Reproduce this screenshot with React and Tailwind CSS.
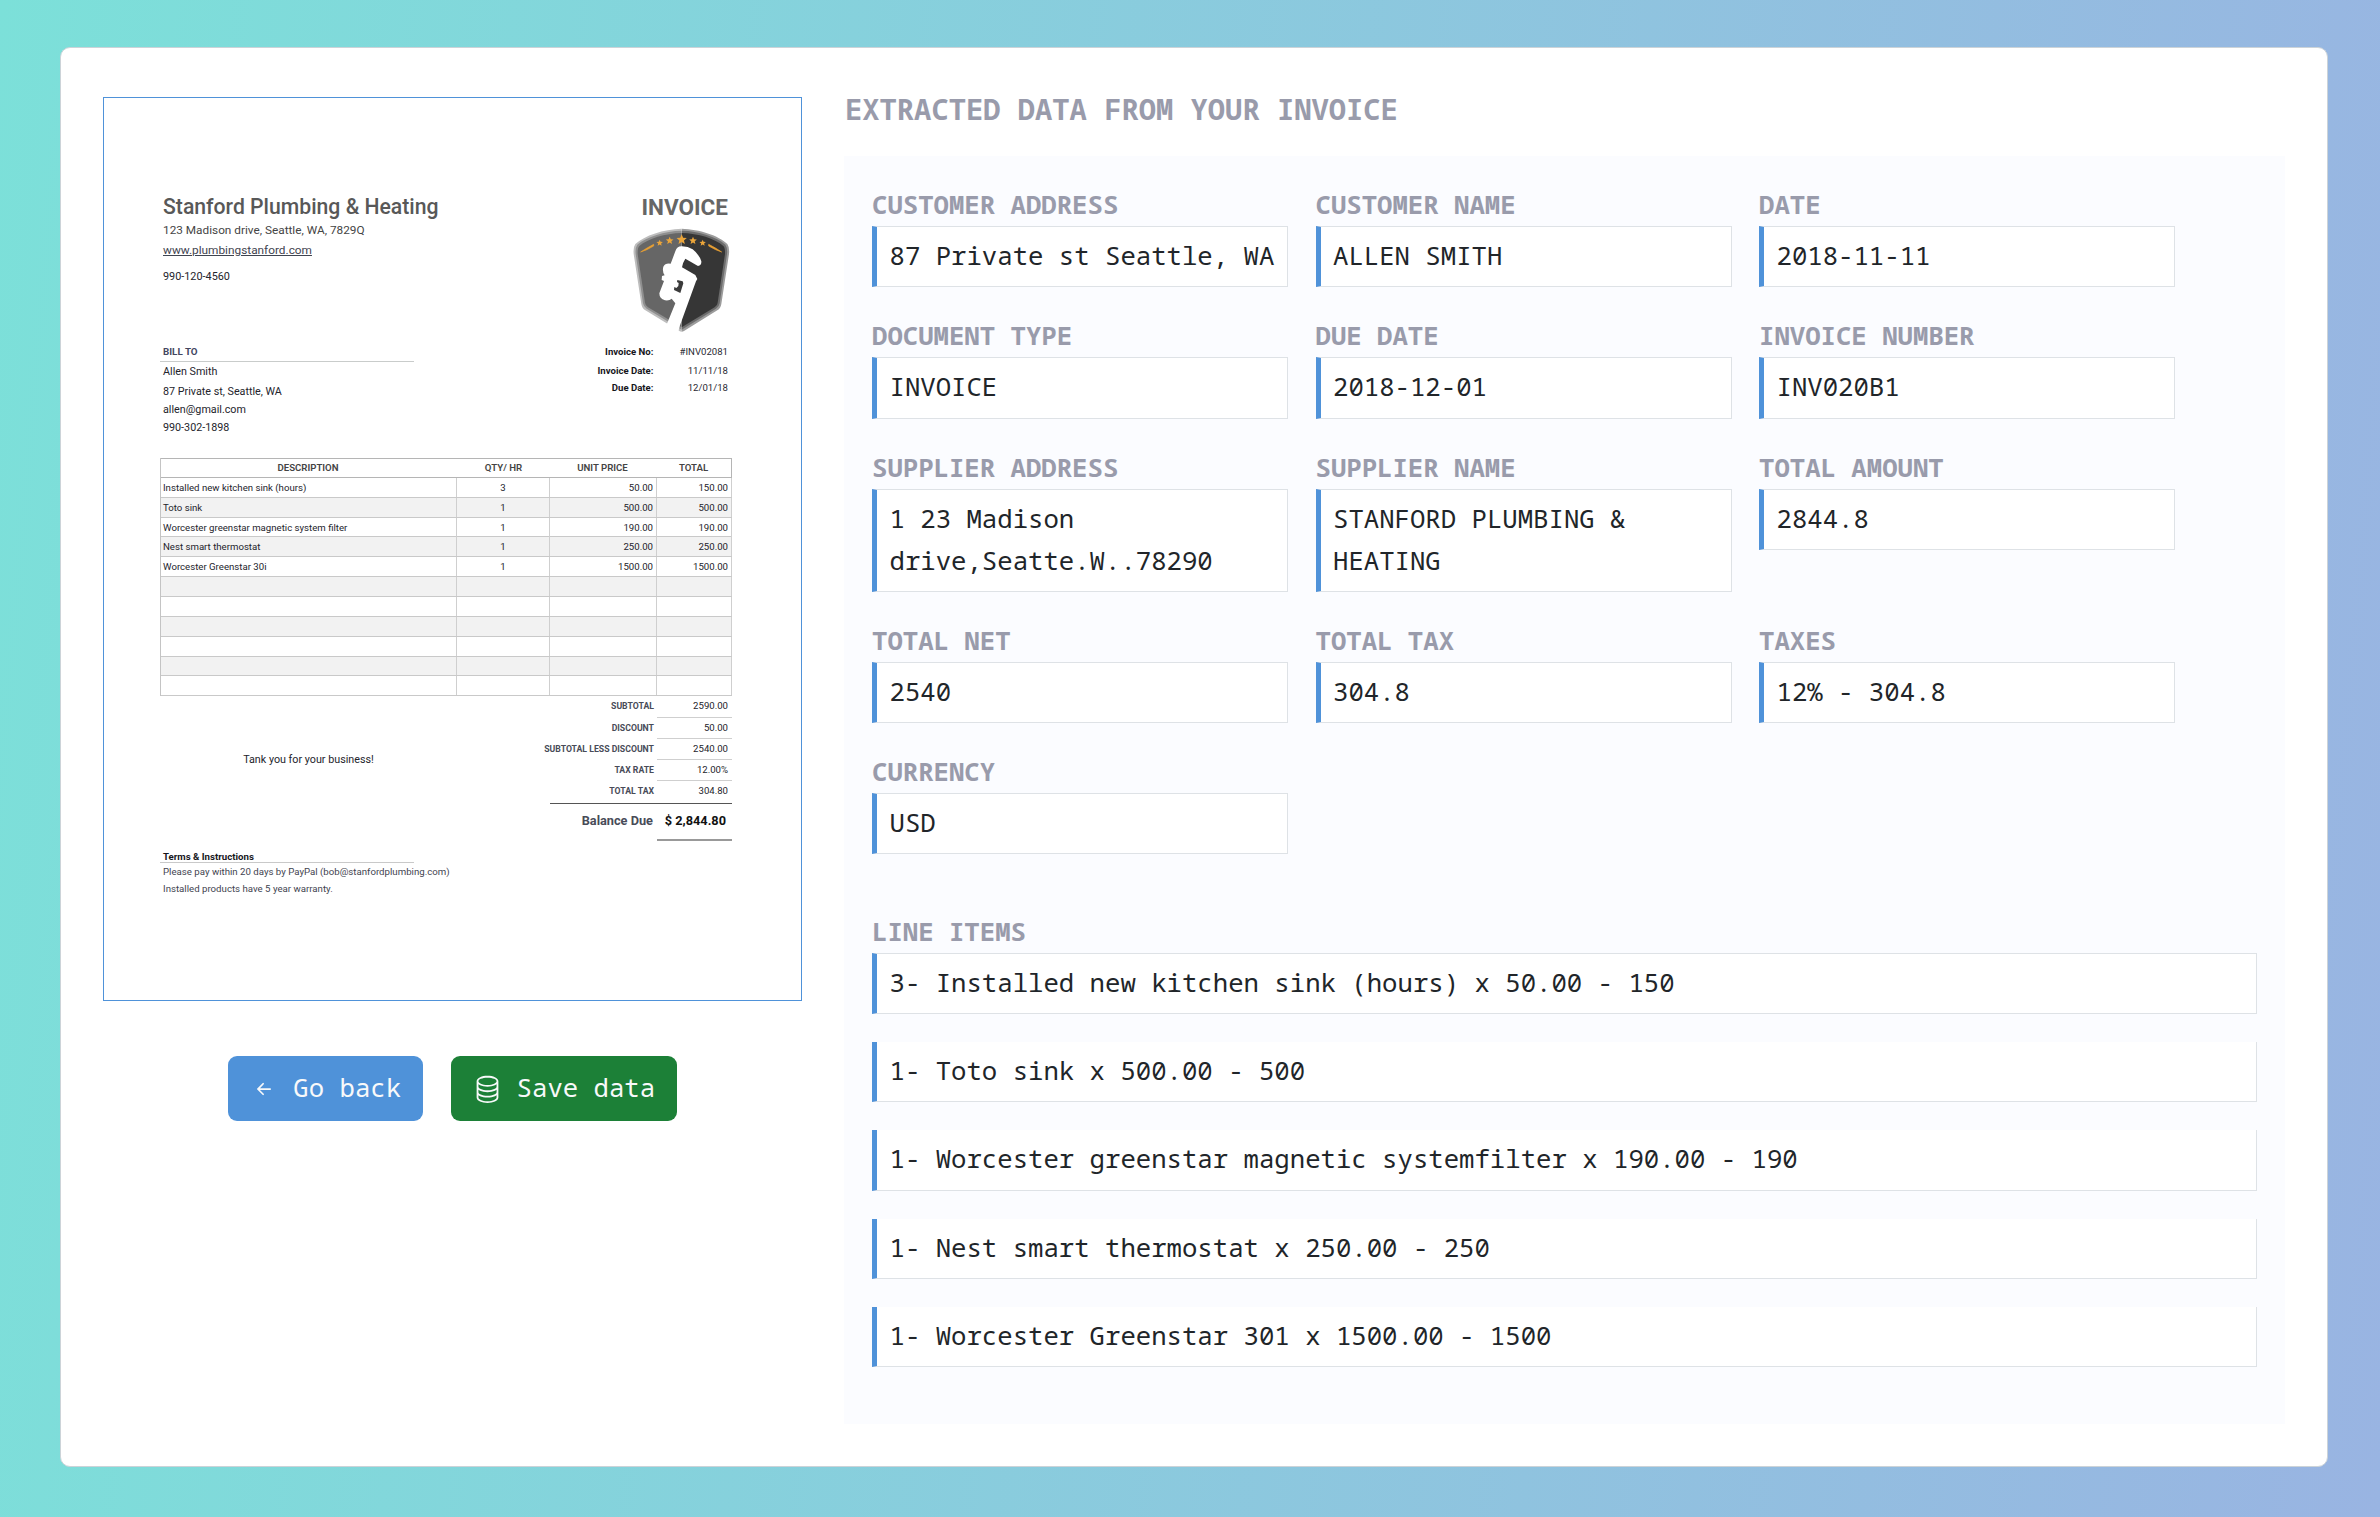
import { BsArrowLeftShort, BsDatabase } from 'react-icons/bs';

const fields = [
  ['CUSTOMER ADDRESS', '87 Private st Seattle, WA'],
  ['CUSTOMER NAME', 'ALLEN SMITH'],
  ['DATE', '2018-11-11'],
  ['DOCUMENT TYPE', 'INVOICE'],
  ['DUE DATE', '2018-12-01'],
  ['INVOICE NUMBER', 'INV020B1'],
  ['SUPPLIER ADDRESS', '1 23 Madison drive,Seatte.W..78290'],
  ['SUPPLIER NAME', 'STANFORD PLUMBING & HEATING'],
  ['TOTAL AMOUNT', '2844.8'],
  ['TOTAL NET', '2540'],
  ['TOTAL TAX', '304.8'],
  ['TAXES', '12% - 304.8'],
  ['CURRENCY', 'USD'],
];

const lineItems = [
  '3- Installed new kitchen sink (hours) x 50.00 - 150',
  '1- Toto sink x 500.00 - 500',
  '1- Worcester greenstar magnetic systemfilter x 190.00 - 190',
  '1- Nest smart thermostat x 250.00 - 250',
  '1- Worcester Greenstar 301 x 1500.00 - 1500',
];

const invoiceRows = [
  ['Installed new kitchen sink (hours)', '3', '50.00', '150.00'],
  ['Toto sink', '1', '500.00', '500.00'],
  ['Worcester greenstar magnetic system filter', '1', '190.00', '190.00'],
  ['Nest smart thermostat', '1', '250.00', '250.00'],
  ['Worcester Greenstar 30i', '1', '1500.00', '1500.00'],
  ['', '', '', ''],
  ['', '', '', ''],
  ['', '', '', ''],
  ['', '', '', ''],
  ['', '', '', ''],
  ['', '', '', ''],
];

const totals = [
  ['SUBTOTAL', '2590.00'],
  ['DISCOUNT', '50.00'],
  ['SUBTOTAL LESS DISCOUNT', '2540.00'],
  ['TAX RATE', '12.00%'],
  ['TOTAL TAX', '304.80'],
];

const star = 'M0 -10 L2.7 -3.5 L9.6 -3.1 L4.3 1.4 L6 8.1 L0 4.4 L-6 8.1 L-4.3 1.4 L-9.6 -3.1 L-2.7 -3.5 Z';

function Logo() {
  return (
    <svg viewBox="41 54 291 312" className="h-[104px] w-[97px]">
      <defs>
        <clipPath id="left-half"><rect x="30" y="40" width="157" height="340" /></clipPath>
        <clipPath id="right-half"><rect x="187" y="40" width="160" height="340" /></clipPath>
      </defs>
      <g clipPath="url(#left-half)">
        <path d="M187 56 C132 58 76 76 48 102 Q41 112 43 132 L66 282 Q68 295 78 301 L180 363 Q187 367 194 363 L294 301 Q304 293 306 282 L329 132 Q331 112 324 102 C298 76 240 58 187 56Z" fill="#bdbdbd" />
        <path d="M187 62 C136 63 82 80 54 104 Q47 114 49 132 L71 280 Q73 291 82 296 L187 359Z" fill="#8f8f8f" />
        <path d="M187 69 C138 70 86 86 60 108 Q54 114 55 132 L77 278 Q78 287 86 292 L187 352Z" fill="#666" />
      </g>
      <g clipPath="url(#right-half)">
        <path d="M187 56 C240 58 298 76 324 102 Q331 112 329 132 L306 282 Q304 295 294 301 L194 363 Q187 367 180 363Z" fill="#9c9c9c" />
        <path d="M187 62 C238 63 292 80 318 104 Q325 114 323 132 L301 280 Q299 291 290 296 L187 359Z" fill="#6c6c6c" />
        <path d="M187 69 C236 70 288 86 312 108 Q318 114 317 132 L295 278 Q294 287 286 292 L187 352Z" fill="#363636" />
      </g>
      <path d="M64 126 Q84 113 103 103 L103 108 Q84 120 64 126Z M307 126 Q288 113 268 103 L268 108 Q288 120 307 126Z" fill="#e8a033" stroke="#e8a033" strokeWidth="2" />
      <g fill="#eba53a">
        <path d={star} transform="translate(121 99)" />
        <path d={star} transform="translate(151 92) scale(1.2)" />
        <path d={star} transform="translate(187 89) scale(1.6)" />
        <path d={star} transform="translate(221 92) scale(1.2)" />
        <path d={star} transform="translate(250 99)" />
      </g>
      <path
        d="M168 124 Q173 108 188 109 Q206 109 220 118 Q240 134 246 154 Q247 166 236 168 L198 146 Q190 158 188 172 L228 195 L234 207 L230 214 L182 346 L176 368 L140 349 L168 280 L157 266 Q150 273 137 271 Q120 266 120 250 L134 213 L127 210 L128 198 L136 196 Q128 184 132 170 Q138 158 154 161 Z"
        fill="#fff"
      />
      <path d="M174 210 L190 214 L192 220 L183 249 L164 240 L165 231 L171 234 L177 228 L178 219 L173 216 Z" fill="#3b3b3b" />
    </svg>
  );
}

function MetaRow({ label, value, className }) {
  return (
    <div className={'flex justify-end text-[9.6px] ' + className}>
      <span className="font-bold text-[#16161c]">{label}</span>
      <span className="w-[74.5px] text-right text-[#2a2a33]">{value}</span>
    </div>
  );
}

function InvoiceDocument() {
  return (
    <div className="h-[904px] w-[699px] border border-[#4f92d9] bg-white pt-[96px] pr-[69px] pl-[56px] font-[Roboto,sans-serif] whitespace-nowrap text-[#24242c]">
      <div className="flex justify-between">
        <div className="w-[254px]">
          <div className="pl-[3px]">
            <div className="h-[25px] text-[21.2px] leading-[26px] font-medium text-[#585858]">Stanford Plumbing &amp; Heating</div>
            <div className="h-[21px] text-[11.8px] leading-[22px] text-[#454545]">123 Madison drive, Seattle, WA, 7829Q</div>
            <div className="h-[22px] text-[11.83px] leading-[21px] text-[#3f4450] underline">www.plumbingstanford.com</div>
            <div className="h-[29px] text-[10.85px] leading-[29px]">990-120-4560</div>
          </div>
          <div className="mt-[52px] h-[19px] border-b border-[#c9cccb] pl-[3px] text-[9.8px] leading-[18px] font-bold text-[#43465f]">BILL TO</div>
          <div className="pl-[3px] text-[10.75px]">
            <div className="h-[20px] leading-[19px]">Allen Smith</div>
            <div className="h-[20px] leading-[20px]">87 Private st, Seattle, WA</div>
            <div className="h-[17px] leading-[16px]">allen@gmail.com</div>
            <div className="h-[19px] leading-[18px]">990-302-1898</div>
          </div>
        </div>
        <div className="flex flex-col items-end">
          <div className="h-[26px] pr-[4px] text-[22.5px] leading-[26px] font-bold text-[#666]">INVOICE</div>
          <div className="mt-2 mr-[2px]"><Logo /></div>
          <div className="mt-[10px] pr-1">
            <MetaRow label="Invoice No:" value="#INV02081" className="h-[19px] leading-[19px]" />
            <MetaRow label="Invoice Date:" value="11/11/18" className="h-[19px] leading-[20px]" />
            <MetaRow label="Due Date:" value="12/01/18" className="h-[15px] leading-[15px]" />
          </div>
        </div>
      </div>

      <div className="mt-[20px] border-l border-[#c4c4c4] text-[9.65px]">
        <div className="grid h-[19.8px] grid-cols-[296px_93px_107px_1fr] border-t border-r border-b border-[#b5b5b5] text-center leading-[18px] font-semibold text-[#444]">
          <span className="pr-[2px]">DESCRIPTION</span>
          <span>QTY/ HR</span>
          <span className="pr-[2px]">UNIT PRICE</span>
          <span className="pr-px">TOTAL</span>
        </div>
        {invoiceRows.map((row, i) => (
          <div key={i} className="grid h-[19.87px] grid-cols-[296px_93px_107px_1fr] border-b border-[#c9c9c9] leading-[19px] odd:bg-[#f2f2f2]">
            <span className="border-r border-[#cfcfcf] pl-[2px]">{row[0]}</span>
            <span className="border-r border-[#cfcfcf] text-center">{row[1]}</span>
            <span className="border-r border-[#cfcfcf] pr-[3px] text-right">{row[2]}</span>
            <span className="border-r border-[#cfcfcf] pr-[3px] text-right">{row[3]}</span>
          </div>
        ))}
      </div>

      <div className="flex">
        <div className="w-[297px] pt-[55px]">
          <div className="h-[18px] text-center text-[10.75px] leading-[18px]">Tank you for your business!</div>
          <div className="mt-[82px] h-[12px] w-[254px] border-b border-[#c9c9c9] pl-[3px] text-[9.67px] leading-[11px] font-bold text-[#16161c]">Terms &amp; Instructions</div>
          <div className="pl-[3px] text-[9.67px] text-[#3f4450]">
            <div className="h-[17px] leading-[17px]">Please pay within 20 days by PayPal (bob@stanfordplumbing.com)</div>
            <div className="h-[17px] leading-[17px]">Installed products have 5 year warranty.</div>
          </div>
        </div>
        <div className="flex flex-1 flex-col items-end text-right">
          {totals.map(([label, value], i) => (
            <div key={label} className="grid h-[21.3px] grid-cols-[1fr_75px] leading-[20px]">
              <span className="pr-[3px] text-[8.7px] font-bold text-[#484b58]">{label}</span>
              <span className={'pr-1 text-[9.6px] ' + (i < 4 ? 'border-b border-[#cfcfcf]' : '')}>{value}</span>
            </div>
          ))}
          <div className="grid h-[38px] w-[182px] grid-cols-[1fr_75px] border-t border-[#555] text-[12.75px] leading-[34px] font-bold">
            <span className="pr-[4px] text-[#484b58]">Balance Due</span>
            <span className="border-b-2 border-[#999] pr-[6px] text-[#111]">$ 2,844.80</span>
          </div>
        </div>
      </div>
    </div>
  );
}

function Field({ label, value }) {
  return (
    <div>
      <div className="h-[42px] leading-[41px] font-bold text-[#999bab]">{label}</div>
      <div className="border border-l-[5px] border-[#dee2e6] border-l-[#4f92d9] bg-white pt-[8px] pb-[9.25px] pl-[12.5px] leading-[42px] text-[#212529]">{value}</div>
    </div>
  );
}

export default function App() {
  return (
    <div className="h-[1517px] w-[2380px] bg-[linear-gradient(95deg,#7ce0d9_0%,#99b4e2_100%)] pt-[47px] pl-[60px] font-['Noto_Sans_Mono','DejaVu_Sans_Mono',monospace] text-[25.67px]">
      <div className="flex h-[1420px] w-[2268px] rounded-[10px] border border-[#ccd3d8] bg-white pt-[49px] pl-[42px]">
        <div className="w-[699px]">
          <InvoiceDocument />
          <div className="mt-[55px] flex justify-center gap-7 text-[#f8f9fa]">
            <button className="flex h-[65px] items-center gap-[15.5px] rounded-[9px] bg-[#4f92d9] pr-[22px] pl-[21.5px]">
              <BsArrowLeftShort className="size-7" />
              <span className="-mt-px">Go back</span>
            </button>
            <button className="flex h-[65px] items-center gap-[14.5px] rounded-[9px] bg-[#1c8037] pr-[21.5px] pl-[22px]">
              <BsDatabase className="size-[29px]" />
              <span className="-mt-px">Save data</span>
            </button>
          </div>
        </div>

        <div className="ml-[42px] w-[1441px]">
          <h1 className="-mt-[9px] mb-[26px] h-[42px] pl-px text-[28.8px] leading-[41px] font-bold text-[#999bab]">EXTRACTED DATA FROM YOUR INVOICE</h1>
          <div className="h-[1268px] bg-[#fbfcff] p-7">
            <div className="grid grid-cols-[416px_416px_416px] items-start gap-x-[27.5px] gap-y-[28px]">
              {fields.map(([label, value]) => (
                <Field key={label} label={label} value={value} />
              ))}
            </div>
            <div className="mt-[56.5px] h-[42px] leading-[41px] font-bold text-[#999bab]">LINE ITEMS</div>
            <div className="flex flex-col gap-7">
              {lineItems.map((item) => (
                <div
                  key={item}
                  className="border border-t-0 border-l-[5px] border-[#dee2e6] border-l-[#4f92d9] bg-white pt-[8px] pb-[9.25px] pl-[12.5px] leading-[42px] text-[#212529] first:border-t"
                >
                  {item}
                </div>
              ))}
            </div>
          </div>
        </div>
      </div>
    </div>
  );
}
